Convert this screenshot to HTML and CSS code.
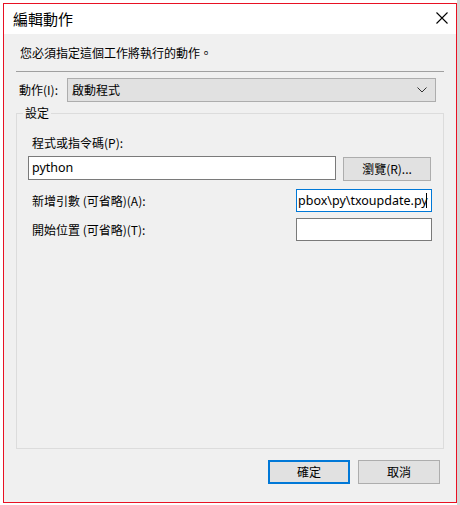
FILE: index.html
```html
<!DOCTYPE html>
<html lang="zh-Hant">
<head>
<meta charset="utf-8">
<title>編輯動作</title>
<link rel="stylesheet" href="styles.css">
</head>
<body>
<div class="dialog">
  <div class="titlebar">
    <span class="title">編輯動作</span>
    <svg class="close" width="12" height="12" viewBox="0 0 12 12"><path d="M0.5 0.5 L11.5 11.5 M11.5 0.5 L0.5 11.5" stroke="#000" stroke-width="1.1" fill="none"/></svg>
  </div>
  <div class="body">
    <p class="intro">您必須指定這個工作將執行的動作。</p>
    <div class="sep"></div>
    <div class="action-row">
      <span class="action-label">動作(I):</span>
      <div class="combo">
        <span>啟動程式</span>
        <svg class="chev" width="10" height="6" viewBox="0 0 10 6"><path d="M0.5 0.5 L5 5 L9.5 0.5" stroke="#333" stroke-width="1" fill="none"/></svg>
      </div>
    </div>
    <fieldset class="group">
      <legend>設定</legend>
      <div class="field-label">程式或指令碼(P):</div>
      <div class="prog-row">
        <div class="input wide">python</div>
        <div class="btn browse">瀏覽(R)...</div>
      </div>
      <div class="arg-row first">
        <span class="field-label">新增引數 (可省略)(A):</span>
        <div class="input short focus"><span>pbox\py\txoupdate.py</span><span class="caret"></span></div>
      </div>
      <div class="arg-row second">
        <span class="field-label">開始位置 (可省略)(T):</span>
        <div class="input short"></div>
      </div>
    </fieldset>
    <div class="buttons">
      <div class="btn default">確定</div>
      <div class="btn">取消</div>
    </div>
  </div>
</div>
</body>
</html>
```
FILE: styles.css
```css
html, body {
  margin: 0;
  padding: 0;
}
body {
  width: 460px;
  height: 505px;
  overflow: hidden;
  background: linear-gradient(to right, #ffffff 457px, #d6d6d6 457px);
  font-family: "Noto Sans CJK TC", "Noto Sans", sans-serif;
  font-size: 12px;
  line-height: 16px;
  color: #000;
}
.dialog {
  margin: 3px 0 0 3px;
  width: 454px;
  height: 500px;
  box-sizing: border-box;
  border: 1px solid #e81123;
  background: #f0f0f0;
  display: flex;
  flex-direction: column;
}
.titlebar {
  height: 30px;
  background: #ffffff;
  display: flex;
  align-items: center;
  justify-content: space-between;
  padding: 0 8px 0 9px;
}
.title {
  font-size: 15px;
  line-height: 20px;
  margin-top: -1px;
}
.close {
  display: block;
  margin-top: -2px;
}
.body {
  padding: 11px 12px 0 12px;
}
.intro {
  margin: 0;
  padding-left: 4px;
  height: 16px;
}
.sep {
  margin-top: 10px;
  height: 1px;
  background: #a0a0a0;
}
.action-row {
  margin-top: 6px;
  display: flex;
  align-items: center;
}
.action-label {
  width: 48px;
  padding-left: 3px;
}
.combo {
  width: 369px;
  height: 24px;
  box-sizing: border-box;
  background: #e1e1e1;
  border: 1px solid #adadad;
  display: flex;
  align-items: center;
  justify-content: space-between;
  padding: 0 8px 0 4px;
}
.chev {
  display: block;
}
.group {
  margin: 3px 0 0 0;
  padding: 14px 11px 207px 11px;
  border: 1px solid #dcdcdc;
  min-width: 0;
}
.group legend {
  padding: 0 2px;
  margin-left: -5px;
  line-height: 16px;
}
.field-label {
  padding-left: 4px;
  height: 16px;
}
.prog-row {
  margin-top: 5px;
  display: flex;
  justify-content: space-between;
  align-items: flex-start;
}
.input {
  box-sizing: border-box;
  background: #ffffff;
  border: 1px solid #7a7a7a;
  font-family: "Noto Sans", sans-serif;
  font-size: 12.5px;
  padding: 0 3px;
  display: flex;
  align-items: center;
  overflow: hidden;
  white-space: nowrap;
}
.input.wide {
  width: 308px;
  height: 24px;
}
.input.short {
  width: 136px;
  height: 23px;
  padding: 0 1px;
}
.input.focus {
  border-color: #0078d7;
}
.caret {
  width: 1px;
  height: 15px;
  background: #000;
  margin-left: -2px;
}
.arg-row {
  display: flex;
  justify-content: space-between;
  align-items: center;
}
.arg-row.first {
  margin-top: 8px;
}
.arg-row.second {
  margin-top: 6px;
}
.btn {
  box-sizing: border-box;
  width: 82px;
  height: 24px;
  background: #e1e1e1;
  border: 1px solid #adadad;
  display: flex;
  align-items: center;
  justify-content: center;
}
.btn.browse {
  width: 88px;
  margin-top: 1px;
  margin-right: 1px;
}
.btn.default {
  border: 2px solid #0078d7;
}
.buttons {
  margin-top: 11px;
  display: flex;
  justify-content: flex-end;
  gap: 8px;
  padding-right: 4px;
}
```
